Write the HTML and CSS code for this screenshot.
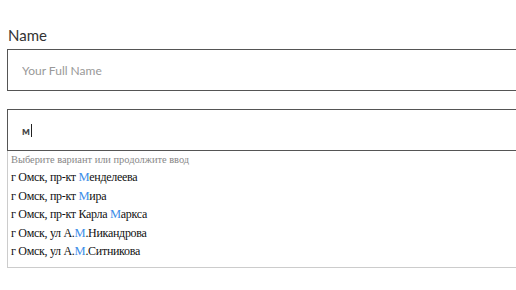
FILE: index.html
```html
<!DOCTYPE html>
<html lang="ru">
<head>
    <meta charset="UTF-8">
    <meta name="viewport" content="width=device-width, initial-scale=1.0">
    <title>Адрес</title>
    <link rel="stylesheet" href="styles.css">
</head>
<body>
    <div class="form">
        <label class="field-label" for="name">Name</label>
        <div class="field">
            <input type="text" id="name" class="text-input" placeholder="Your Full Name">
        </div>

        <div class="field address">
            <div class="text-input typed">м<span class="caret"></span></div>
            <div class="suggestions">
                <div class="suggestions-hint">Выберите вариант или продолжите ввод</div>
                <div class="suggestion">г Омск, пр-кт <b>М</b>енделеева</div>
                <div class="suggestion">г Омск, пр-кт <b>М</b>ира</div>
                <div class="suggestion">г Омск, пр-кт Карла <b>М</b>аркса</div>
                <div class="suggestion">г Омск, ул А.<b>М</b>.Никандрова</div>
                <div class="suggestion">г Омск, ул А.<b>М</b>.Ситникова</div>
            </div>
        </div>
    </div>
</body>
</html>
```

FILE: styles.css
```css
body {
    margin: 0;
    padding: 0;
    background: #fff;
    font-family: Lato, "Open Sans", sans-serif;
}

.form {
    padding: 26px 0 0 7px;
}

.field-label {
    display: block;
    font-size: 15px;
    color: #333;
    line-height: 18px;
    padding-left: 1px;
    margin-bottom: 5px;
}

.field {
    margin-bottom: 18px;
}

.text-input {
    display: block;
    box-sizing: border-box;
    width: 100%;
    height: 42px;
    border: 1px solid #555;
    border-right: none;
    border-radius: 0;
    padding: 0 14px;
    font-family: Lato, "Open Sans", sans-serif;
    font-size: 12px;
    color: #333;
    outline: none;
}

.text-input::placeholder {
    color: #999;
}

.typed {
    display: flex;
    align-items: center;
    font-size: 11px;
    font-weight: bold;
    color: #444;
}

.caret {
    display: inline-block;
    width: 1px;
    height: 13px;
    background: #222;
    margin-left: 1px;
}

.suggestions {
    border: 1px solid #ccc;
    border-top: none;
    border-right: none;
    padding: 1px 0 6px 3px;
    font-family: "Liberation Serif", serif;
}

.suggestions-hint {
    font-size: 10.4px;
    color: #888;
    line-height: 16px;
}

.suggestion {
    font-size: 12px;
    letter-spacing: -0.3px;
    color: #111;
    line-height: 18.5px;
}

.suggestion b {
    font-weight: normal;
    color: #3d8ee8;
    font-size: 12.5px;
}
```
